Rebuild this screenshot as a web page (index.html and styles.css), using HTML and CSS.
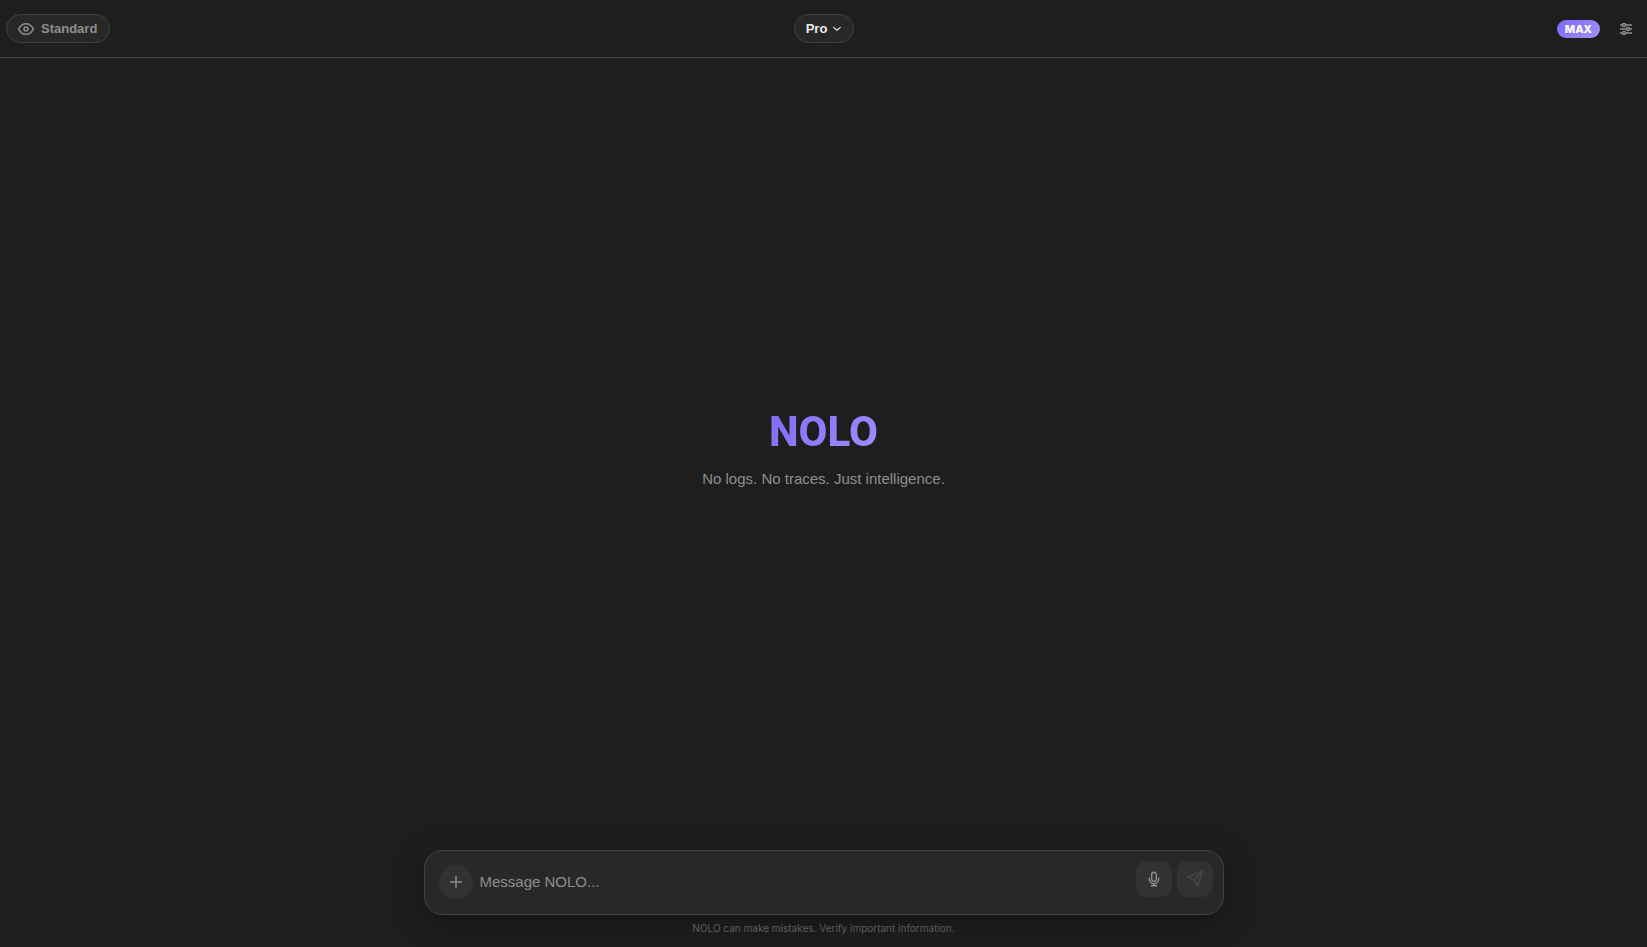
FILE: index.html
```html
<!DOCTYPE html>
<html lang="en">
<head>
    <meta charset="UTF-8">
    <meta name="viewport" content="width=device-width, initial-scale=1.0">
    <title>NOLO</title>
    <link rel="stylesheet" href="styles.css">
</head>
<body>
    <header class="topbar">
        <div class="topbar-left">
            <button type="button" class="pill pill-mode">
                <svg width="16" height="16" viewBox="0 0 24 24" fill="none" stroke="currentColor" stroke-width="2.3" stroke-linecap="round" stroke-linejoin="round" aria-hidden="true">
                    <path d="M1 12s4-8 11-8 11 8 11 8-4 8-11 8-11-8-11-8z"/>
                    <circle cx="12" cy="12" r="3"/>
                </svg>
                Standard
            </button>
        </div>
        <button type="button" class="pill pill-model" aria-haspopup="listbox">
            Pro
            <svg width="10" height="10" viewBox="0 0 24 24" fill="none" stroke="currentColor" stroke-width="2.5" stroke-linecap="round" stroke-linejoin="round" aria-hidden="true">
                <path d="M4 8l8 7 8-7"/>
            </svg>
        </button>
        <div class="topbar-right">
            <span class="badge">MAX</span>
            <button type="button" class="icon-btn" aria-label="Settings">
                <svg width="12" height="12" viewBox="0 0 12 12" fill="none" stroke="currentColor" stroke-width="1.5" aria-hidden="true">
                    <path d="M0 2h2.5M5.5 2H12M0 6h6.5M9.5 6H12M0 10h2.5M5.5 10H12"/>
                    <circle cx="4" cy="2" r="1.5"/>
                    <circle cx="8" cy="6" r="1.5"/>
                    <circle cx="4" cy="10" r="1.5"/>
                </svg>
            </button>
        </div>
    </header>

    <main class="welcome">
        <h1 class="logo">NOLO</h1>
        <p class="tagline">No logs. No traces. Just intelligence.</p>
    </main>

    <footer class="bottom">
        <form class="composer">
            <button type="button" class="attach" aria-label="Add attachment">
                <svg width="16" height="16" viewBox="0 0 24 24" fill="none" stroke="currentColor" stroke-width="2.3" stroke-linecap="round" aria-hidden="true">
                    <path d="M12 4v16M4 12h16"/>
                </svg>
            </button>
            <input type="text" class="message" placeholder="Message NOLO..." aria-label="Message NOLO">
            <div class="actions">
                <button type="button" class="action" aria-label="Voice input">
                    <svg width="16" height="16" viewBox="0 0 24 24" fill="none" stroke="currentColor" stroke-width="2.2" stroke-linecap="round" stroke-linejoin="round" aria-hidden="true">
                        <path d="M12 2a3.5 3.5 0 0 0-3.5 3.5V12a3.5 3.5 0 0 0 7 0V5.5A3.5 3.5 0 0 0 12 2z"/>
                        <path d="M5 11v1a7 7 0 0 0 14 0v-1"/>
                        <path d="M12 19v3M8 22h8"/>
                    </svg>
                </button>
                <button type="submit" class="action action-send" aria-label="Send" disabled>
                    <svg width="18" height="18" viewBox="0 0 24 24" fill="none" stroke="currentColor" stroke-width="2.3" stroke-linecap="round" stroke-linejoin="round" aria-hidden="true">
                        <path d="M22 2L11 13"/>
                        <path d="M22 2l-7 20-4-9-9-4 20-7z"/>
                    </svg>
                </button>
            </div>
        </form>
        <p class="disclaimer">NOLO can make mistakes. Verify important information.</p>
    </footer>
</body>
</html>
```
FILE: styles.css
```css
* { box-sizing: border-box; }

body {
    margin: 0;
    min-height: 100vh;
    display: flex;
    flex-direction: column;
    background: #1e1e1e;
    color: #ececec;
    font-family: "Liberation Sans", Arial, sans-serif;
}

button {
    padding: 0;
    border: none;
    background: none;
    color: inherit;
    font-family: inherit;
    cursor: pointer;
}

svg { display: block; }

/* top bar */
.topbar {
    display: grid;
    grid-template-columns: 1fr auto 1fr;
    align-items: center;
    height: 58px;
    padding: 0 5px 0 6px;
    border-bottom: 1px solid #424242;
}

.topbar-right {
    display: flex;
    align-items: center;
    justify-content: flex-end;
    gap: 10px;
}

.pill {
    display: flex;
    align-items: center;
    height: 29px;
    border: 1px solid #404040;
    border-radius: 15px;
    background: #282828;
    font-size: 13px;
    font-weight: 700;
}

.pill-mode {
    gap: 7px;
    padding: 0 12px 0 11px;
    color: #8e8e8e;
}

.pill-model {
    gap: 5px;
    padding: 0 11px;
}

.badge {
    padding: 0 8px;
    border-radius: 9px;
    background: linear-gradient(135deg, #7c6af7, #a48fff);
    color: #fff;
    font-family: Inter, sans-serif;
    font-size: 11px;
    font-weight: 800;
    line-height: 18px;
}

.icon-btn {
    display: flex;
    align-items: center;
    justify-content: center;
    width: 32px;
    height: 32px;
    color: #8e8e8e;
}

/* welcome */
.welcome {
    flex: 1;
    display: flex;
    flex-direction: column;
    align-items: center;
    justify-content: center;
    padding-bottom: 10px;
}

.logo {
    margin: 0 0 10px;
    background: linear-gradient(135deg, #7c6af7, #a48fff);
    -webkit-background-clip: text;
    background-clip: text;
    color: transparent;
    font-family: Roboto, sans-serif;
    font-size: 42px;
    font-weight: 800;
    line-height: 50px;
}

.tagline {
    margin: 0;
    color: #8e8e8e;
    font-size: 16px;
    line-height: 24px;
}

/* composer */
.bottom {
    padding: 0 16px 10px;
}

.composer {
    display: flex;
    align-items: flex-start;
    max-width: 800px;
    height: 65px;
    margin: 0 auto;
    padding: 10px 10px 10px 14px;
    border: 1px solid #424242;
    border-radius: 18px;
    background: #282828;
    box-shadow: 0 8px 32px rgba(0, 0, 0, 0.3);
}

.attach {
    display: flex;
    align-items: center;
    justify-content: center;
    width: 34px;
    height: 34px;
    margin-top: 4px;
    border-radius: 50%;
    background: #323232;
    color: #8e8e8e;
}

.message {
    flex: 1;
    min-width: 0;
    height: 32px;
    margin-top: 4px;
    padding: 0 7px;
    border: none;
    outline: none;
    background: none;
    color: #ececec;
    font-family: inherit;
    font-size: 15px;
}

.message::placeholder { color: #8e8e8e; }

.tagline { font-size: 15px; }

.actions {
    display: flex;
    gap: 5px;
}

.action {
    display: flex;
    align-items: center;
    justify-content: center;
    width: 36px;
    height: 36px;
    border-radius: 10px;
    background: #323232;
    color: #8e8e8e;
}

.action-send {
    color: #444;
    cursor: default;
}

.disclaimer {
    margin: 5px 0 0;
    color: #5c5c5c;
    font-family: Inter, sans-serif;
    font-size: 10px;
    line-height: 17px;
    text-align: center;
}
```
